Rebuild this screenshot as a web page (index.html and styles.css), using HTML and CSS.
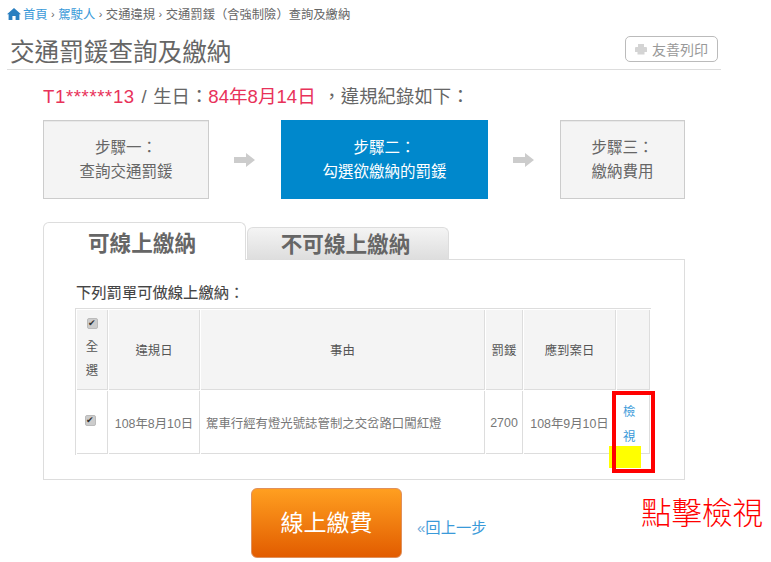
FILE: index.html
```html
<!DOCTYPE html>
<html>
<head lang="zh-Hant">
    <meta charset="UTF-8">
    <title>交通罰鍰查詢及繳納</title>
    <link rel="stylesheet" href="styles.css">
</head>
<body>
<div class="page">
    <div class="breadcrumb">
        <svg class="home-icon" viewBox="0 0 14 12" width="14" height="12">
            <path d="M7 0 L14 6.2 L12.4 6.2 L12.4 12 L8.6 12 L8.6 8 L5.4 8 L5.4 12 L1.6 12 L1.6 6.2 L0 6.2 Z" fill="#2a7fc0"/>
        </svg>
        <a href="#">首頁</a><span class="sep">›</span><a href="#">駕駛人</a><span class="sep">›</span><span>交通違規</span><span class="sep">›</span><span>交通罰鍰（含強制險）查詢及繳納</span>
    </div>
    <div class="title-bar">
        <h1>交通罰鍰查詢及繳納</h1>
        <a href="#" class="print-btn">
            <svg viewBox="0 0 12 12" width="12" height="12">
                <path d="M3 1 H9 V4 H11 Q12 4 12 5 V9 H9.5 V11.5 H2.5 V9 H0 V5 Q0 4 1 4 H3 Z" fill="#d4d4d4"/>
            </svg>
            友善列印
        </a>
    </div>
    <div class="content">
        <p class="query"><em class="plate">T1******13</em> / 生日：<em>84年8月14日</em> ，違規紀錄如下：</p>
        <div class="steps">
            <div class="step step-one">步驟一：<br>查詢交通罰鍰</div>
            <svg class="arrow" viewBox="0 0 21 14" width="21" height="14"><path d="M0 4 H12 V0 L21 7 L12 14 V10 H0 Z" fill="#ccc"/></svg>
            <div class="step step-two active">步驟二：<br>勾選欲繳納的罰鍰</div>
            <svg class="arrow" viewBox="0 0 21 14" width="21" height="14"><path d="M0 4 H12 V0 L21 7 L12 14 V10 H0 Z" fill="#ccc"/></svg>
            <div class="step step-three">步驟三：<br>繳納費用</div>
        </div>
        <div class="tabs">
            <a href="#" class="tab tab-on">可線上繳納</a>
            <a href="#" class="tab">不可線上繳納</a>
        </div>
        <div class="panel">
            <h2>下列罰單可做線上繳納：</h2>
            <table class="fines">
                <colgroup>
                    <col class="c-check"><col class="c-date"><col class="c-reason"><col class="c-fine"><col class="c-due"><col class="c-view">
                </colgroup>
                <tr class="head">
                    <th class="check-all"><input type="checkbox" checked><br>全<br>選</th>
                    <th>違規日</th>
                    <th>事由</th>
                    <th>罰鍰</th>
                    <th>應到案日</th>
                    <th></th>
                </tr>
                <tr class="row">
                    <td class="center"><input class="row-check" type="checkbox" checked></td>
                    <td class="center">108年8月10日</td>
                    <td>駕車行經有燈光號誌管制之交岔路口闖紅燈</td>
                    <td class="center">2700</td>
                    <td class="center">108年9月10日</td>
                    <td class="view"><a href="#">檢<br>視</a></td>
                </tr>
            </table>
        </div>
        <div class="actions">
            <a href="#" class="pay-btn">線上繳費</a>
            <a href="#" class="back-link"><span>«</span>回上一步</a>
        </div>
    </div>
    <div class="mark-yellow"></div>
    <div class="mark-red"></div>
    <div class="mark-text">點擊檢視</div>
</div>
</body>
</html>
```

FILE: styles.css
```css
* {
    margin: 0;
    padding: 0;
    box-sizing: border-box;
}
html, body {
    height: 562px;
    overflow: hidden;
    background-color: #fff;
}
body {
    font-family: "Liberation Sans", "Noto Sans CJK TC", sans-serif;
    color: #666;
}
a {
    text-decoration: none;
}
.page {
    position: relative;
    width: 771px;
    height: 562px;
}
.breadcrumb {
    display: flex;
    align-items: center;
    height: 20px;
    margin-top: 4px;
    padding-left: 7px;
    font-size: 12.3px;
    color: #666;
}
.breadcrumb a {
    color: #3a9ad9;
}
.home-icon {
    margin-right: 2px;
}
.sep {
    margin: 0 3.5px;
    font-size: 11px;
}
.title-bar {
    display: flex;
    justify-content: space-between;
    align-items: flex-start;
    width: 714px;
    height: 46px;
    margin-left: 7px;
    padding: 12px 3px 0 3px;
    border-bottom: 1px solid #ddd;
}
.title-bar h1 {
    font-size: 24.6px;
    font-weight: normal;
    line-height: 34px;
    color: #666;
}
.print-btn {
    display: flex;
    align-items: center;
    justify-content: center;
    gap: 5px;
    width: 93px;
    height: 26px;
    border: 1px solid #bbb;
    border-radius: 5px;
    font-size: 14px;
    color: #999;
}
.content {
    width: 642px;
    margin-left: 43px;
}
.query {
    height: 50px;
    padding-top: 14px;
    font-size: 18.4px;
    line-height: 26px;
    word-spacing: 1.5px;
    color: #666;
}
.query em {
    font-size: 18.6px;
    font-style: normal;
    color: #e8325a;
}
.query .plate {
    letter-spacing: 0.6px;
}
.steps {
    display: flex;
    align-items: center;
    height: 79px;
}
.step {
    display: flex;
    align-items: center;
    justify-content: center;
    height: 79px;
    text-align: center;
    font-size: 15.5px;
    line-height: 24px;
    background-color: #f4f4f4;
    border: 1px solid #ccc;
    box-shadow: inset 0 1px 0 #e8e8e8;
}
.step-one {
    width: 166px;
}
.step-two {
    width: 207px;
}
.step-three {
    width: 125px;
}
.step.active {
    color: #fff;
    background-color: #0088cc;
    border: 0;
    box-shadow: none;
}
.arrow {
    margin: 0 26px 0 25px;
}
.tabs {
    display: flex;
    align-items: flex-end;
    gap: 1px;
    height: 37px;
    margin-top: 24px;
    margin-bottom: -1px;
    position: relative;
}
.tab {
    display: block;
    width: 202px;
    height: 33px;
    padding-right: 5px;
    text-align: center;
    font-size: 21.6px;
    font-weight: bold;
    line-height: 33px;
    color: #666;
    background: linear-gradient(#f4f4f4, #ddd);
    border: 1px solid #ddd;
    border-bottom: 0;
    border-radius: 6px 6px 0 0;
}
.tab-on {
    width: 203px;
    height: 38px;
    line-height: 42px;
    color: #666;
    background: #fff;
}
.panel {
    height: 221px;
    padding: 22px 32px 0 31px;
    border: 1px solid #ddd;
}
.panel h2 {
    font-size: 15.3px;
    font-weight: normal;
    line-height: 22px;
    margin-left: 1px;
    color: #444;
    -webkit-text-stroke: 0.1px #444;
}
.fines {
    width: 576px;
    margin-top: 4px;
    table-layout: fixed;
    border-collapse: separate;
    border-spacing: 1px;
    border-top: 1px solid #ddd;
    border-left: 1px solid #ddd;
    font-size: 12.4px;
}
.fines th, .fines td {
    border-right: 1px solid #ddd;
    border-bottom: 1px solid #ddd;
}
.fines th {
    height: 80px;
    padding-top: 2px;
    font-weight: normal;
    line-height: 24px;
    background-color: #f4f4f4;
    color: #555;
}
.fines .check-all {
    padding: 0 0 6px;
}
.fines td {
    height: 63px;
    padding: 2px 5px 0;
    color: #777;
}
.fines td.center {
    padding: 2px 0 0;
    text-align: center;
}
.c-check {
    width: 31px;
}
.c-date {
    width: 91px;
}
.c-reason {
    width: 284px;
}
.c-fine {
    width: 37px;
}
.c-due {
    width: 92px;
}
.fines input {
    appearance: none;
    position: relative;
    display: inline-block;
    width: 11px;
    height: 11px;
    vertical-align: middle;
    background-color: #ccc;
    border: 1px solid #bbb;
    border-radius: 2px;
}
.fines input::after {
    content: "✔";
    position: absolute;
    top: -3px;
    left: 0;
    font-size: 9px;
    line-height: 14px;
    color: #333;
}
.fines .row-check {
    margin: 0 3px 6px 0;
}
.fines .view {
    padding: 5px 0 0 6px;
    line-height: 25px;
}
.view a {
    color: #3a9ad9;
}
.actions {
    display: flex;
    align-items: center;
    margin-top: 8px;
    margin-left: 208px;
}
.pay-btn {
    display: block;
    width: 151px;
    height: 70px;
    text-align: center;
    font-size: 23px;
    line-height: 68px;
    color: #fff;
    background: linear-gradient(#ff9f20, #e25c00);
    border: 1px solid #e0905c;
    border-radius: 6px;
}
.back-link {
    margin-left: 15px;
    margin-top: 5px;
    font-size: 15.3px;
    color: #3a9ad9;
}
.back-link span {
    font-size: 15px;
    color: #6aa8d8;
}
.mark-yellow {
    position: absolute;
    left: 609px;
    top: 442px;
    width: 32px;
    height: 22px;
    background-color: #ff0;
}
.mark-red {
    position: absolute;
    left: 612px;
    top: 387px;
    width: 43px;
    height: 82px;
    border: 4px solid #f00;
}
.mark-text {
    position: absolute;
    left: 641px;
    top: 487px;
    font-size: 30.5px;
    font-weight: 300;
    line-height: 44px;
    color: #f00;
}
```
